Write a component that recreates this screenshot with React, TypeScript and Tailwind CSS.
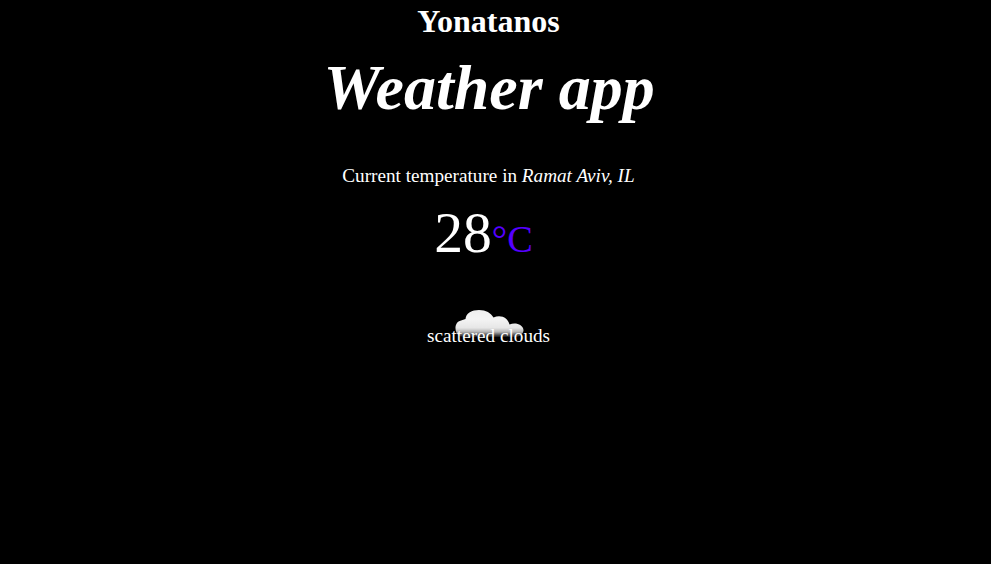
export default function App() {
  return (
    <main className="flex h-[564px] flex-col items-center overflow-hidden bg-black font-['Liberation_Serif',serif] text-white">
      <h1 className="mt-[3px] mr-[14px] text-[32px] leading-[37px] font-bold">Yonatanos</h1>
      <h2 className="mt-[13px] mr-[13px] text-[64px] leading-[70px] font-bold italic">Weather app</h2>
      <p className="mt-[42px] mr-[14px] text-[19.2px] leading-[22px]">
        Current temperature in <em>Ramat Aviv, IL</em>
      </p>
      <p className="mt-[14px] mr-[24px] text-[57.6px] leading-[64px]">
        28<span className="text-[38.4px] text-[#5500ff]">°C</span>
      </p>
      <div className="relative mt-[36px] mr-[14px] flex w-[122px] flex-col items-center">
        <svg className="absolute top-[-1px] left-[26px]" width="76" height="34" viewBox="454 306 76 34">
          <defs>
            <linearGradient id="cloud" x1="0" y1="309" x2="0" y2="338" gradientUnits="userSpaceOnUse">
              <stop offset="0" stopColor="#eeeeee" />
              <stop offset="0.35" stopColor="#f4f4f4" />
              <stop offset="0.65" stopColor="#e6e6e6" />
              <stop offset="0.79" stopColor="#b4b4b4" />
              <stop offset="0.93" stopColor="#333333" />
              <stop offset="1" stopColor="#000000" />
            </linearGradient>
            <filter id="soft">
              <feGaussianBlur stdDeviation="0.75" />
            </filter>
          </defs>
          <path
            d="M459 336C454 332 454 322 461 320.5L465.5 319C466 313 472 310 479 310C486 310 491 313 493.5 317.5C501 314 508 318 509.5 324.5C516 322 523 325 523.5 330C523.5 333 521 336 517 337H463Z"
            fill="url(#cloud)"
            filter="url(#soft)"
          />
        </svg>
        <span className="relative mt-[18px] text-[19.2px] leading-[22px] whitespace-nowrap">scattered clouds</span>
      </div>
    </main>
  );
}
